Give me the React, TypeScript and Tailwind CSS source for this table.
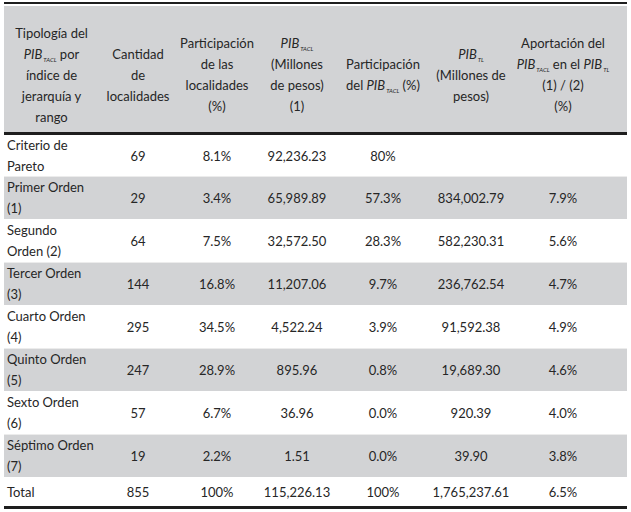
import React from "react";

const GRID = "grid grid-cols-[95px_78px_80px_80px_92px_84px_114px]";

function Pib({ sub }: { sub: string }) {
  return (
    <span className="whitespace-nowrap">
      <i>PIB</i>
      <span className="relative top-[3px] ml-[1px] text-[6px] italic leading-none">{sub}</span>
    </span>
  );
}

type Row = { label: [string, string?]; cells: string[]; grey: boolean };

const ROWS: Row[] = [
  { label: ["Criterio de", "Pareto"], cells: ["69", "8.1%", "92,236.23", "80%", "", ""], grey: false },
  { label: ["Primer Orden", "(1)"], cells: ["29", "3.4%", "65,989.89", "57.3%", "834,002.79", "7.9%"], grey: true },
  { label: ["Segundo", "Orden (2)"], cells: ["64", "7.5%", "32,572.50", "28.3%", "582,230.31", "5.6%"], grey: false },
  { label: ["Tercer Orden", "(3)"], cells: ["144", "16.8%", "11,207.06", "9.7%", "236,762.54", "4.7%"], grey: true },
  { label: ["Cuarto Orden", "(4)"], cells: ["295", "34.5%", "4,522.24", "3.9%", "91,592.38", "4.9%"], grey: false },
  { label: ["Quinto Orden", "(5)"], cells: ["247", "28.9%", "895.96", "0.8%", "19,689.30", "4.6%"], grey: true },
  { label: ["Sexto Orden", "(6)"], cells: ["57", "6.7%", "36.96", "0.0%", "920.39", "4.0%"], grey: false },
  { label: ["Séptimo Orden", "(7)"], cells: ["19", "2.2%", "1.51", "0.0%", "39.90", "3.8%"], grey: true },
];

function HeadCell({ children, className = "" }: { children: React.ReactNode; className?: string }) {
  return (
    <div className={`flex flex-col items-center justify-center text-center whitespace-nowrap ${className}`}>
      {children}
    </div>
  );
}

export default function App() {
  return (
    <div
      className="w-[631px] h-[512px] bg-white pt-[2px] px-[4px] text-[13px] leading-[21px] text-[#262626]"
      style={{ fontFamily: "Lato, 'Open Sans', sans-serif" }}
    >
      <div className="w-[623px] h-[2px] bg-[#1e1e1e]" />
      <div className={`${GRID} mt-[2px] h-[126px] bg-[#d2d3d5] pt-[12px]`}>
        <HeadCell>
          <div>Tipología del</div>
          <div>
            <Pib sub="TACL" /> por
          </div>
          <div>índice de</div>
          <div>jerarquía y</div>
          <div>rango</div>
        </HeadCell>
        <HeadCell>
          <div>Cantidad</div>
          <div>de</div>
          <div>localidades</div>
        </HeadCell>
        <HeadCell>
          <div>Participación</div>
          <div>de las</div>
          <div>localidades</div>
          <div>(%)</div>
        </HeadCell>
        <HeadCell>
          <div>
            <Pib sub="TACL" />
          </div>
          <div>(Millones</div>
          <div>de pesos)</div>
          <div>(1)</div>
        </HeadCell>
        <HeadCell>
          <div>Participación</div>
          <div>
            del <Pib sub="TACL" /> (%)
          </div>
        </HeadCell>
        <HeadCell>
          <div>
            <Pib sub="TL" />
          </div>
          <div>(Millones de</div>
          <div>pesos)</div>
        </HeadCell>
        <HeadCell className="pr-[14px]">
          <div>Aportación del</div>
          <div>
            <Pib sub="TACL" /> en el <Pib sub="TL" />
          </div>
          <div>(1) / (2)</div>
          <div>(%)</div>
        </HeadCell>
      </div>
      <div className="w-[623px] h-[3px] bg-[#1e1e1e]" />
      {ROWS.map((r, i) => (
        <div
          key={i}
          className={`${GRID} ${i === 0 ? "h-[42px]" : "h-[43px]"} ${
            r.grey ? "bg-[#d2d3d5] border-b border-white" : "bg-white border-b border-[#ececec]"
          }`}
        >
          <div className="flex flex-col justify-center pl-[3px] whitespace-nowrap">
            <div>{r.label[0]}</div>
            <div>{r.label[1]}</div>
          </div>
          {r.cells.map((c, j) => (
            <div
              key={j}
              className={`flex items-center justify-center whitespace-nowrap ${j === 5 ? "pr-[14px]" : ""}`}
            >
              {c}
            </div>
          ))}
        </div>
      ))}
      <div className={`${GRID} h-[28px] items-center`}>
        <div className="pl-[3px]">Total</div>
        {["855", "100%", "115,226.13", "100%", "1,765,237.61", "6.5%"].map((c, j) => (
          <div key={j} className={`text-center ${j === 5 ? "pr-[14px]" : ""}`}>
            {c}
          </div>
        ))}
      </div>
      <div className="w-[623px] h-[3px] bg-[#1e1e1e]" />
    </div>
  );
}
